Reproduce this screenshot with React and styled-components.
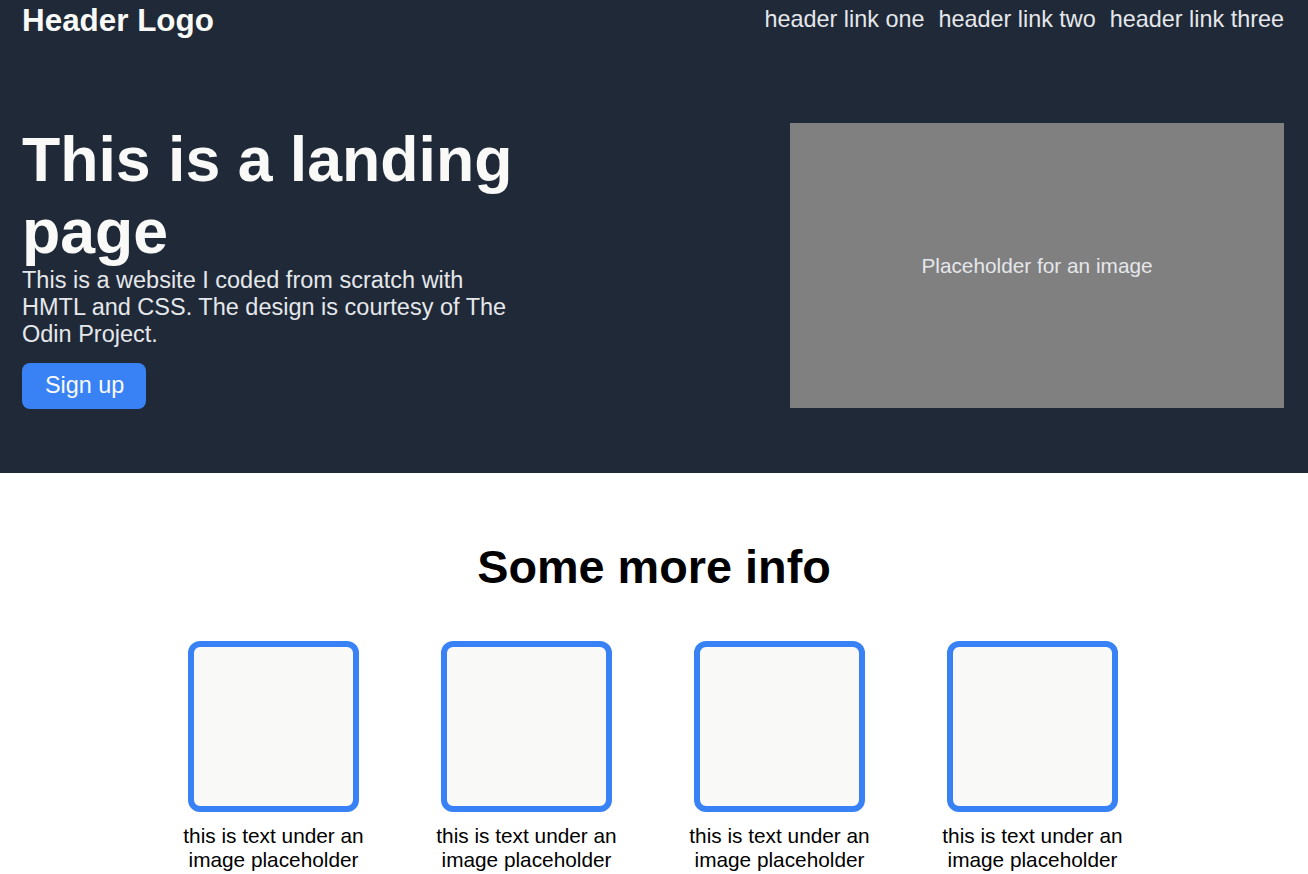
import React from 'react';
import styled, { createGlobalStyle } from 'styled-components';

const GlobalStyle = createGlobalStyle`
  * {
    box-sizing: border-box;
  }

  body {
    margin: 0;
    font-family: 'Liberation Sans', Arial, sans-serif;
    background: #ffffff;
  }
`;

const Top = styled.div`
  background: #1f2937;
  padding: 3px 24px 64px 22px;
`;

const Header = styled.header`
  display: flex;
  justify-content: space-between;
  align-items: center;
`;

const Logo = styled.div`
  color: #f9faf8;
  font-size: 31.4px;
  font-weight: bold;
`;

const Links = styled.nav`
  display: flex;
  gap: 14px;
  margin-top: -4px;
`;

const HeaderLink = styled.a`
  color: #e5e7eb;
  font-size: 23.4px;
  text-decoration: none;
`;

const Hero = styled.section`
  display: flex;
  justify-content: space-between;
  align-items: flex-start;
  margin-top: 84px;
`;

const HeroText = styled.div`
  width: 500px;
`;

const Title = styled.h1`
  margin: 0;
  color: #f9faf8;
  font-size: 62.6px;
  font-weight: bold;
`;

const Lead = styled.p`
  margin: 0 0 15px;
  color: #e5e7eb;
  font-size: 23.5px;
`;

const Button = styled.button`
  background: #3882f6;
  color: #f9faf8;
  border: none;
  border-radius: 8px;
  font-family: inherit;
  font-size: 23.4px;
  padding: 9px 22px 10px 23px;
`;

const ImageBox = styled.div`
  width: 494px;
  height: 285px;
  background: #808080;
  color: #e5e7eb;
  font-size: 20.8px;
  display: flex;
  align-items: center;
  justify-content: center;
`;

const Info = styled.section`
  padding: 67px 0 0;
  display: flex;
  flex-direction: column;
  align-items: center;
`;

const InfoTitle = styled.h2`
  margin: 0 0 47px;
  font-size: 46.8px;
  font-weight: bold;
  color: #000;
`;

const Cards = styled.div`
  display: flex;
  gap: 52px;
  margin-left: -2px;
`;

const Card = styled.div`
  width: 201px;
  display: flex;
  flex-direction: column;
  align-items: center;
`;

const CardImage = styled.div`
  width: 171px;
  height: 171px;
  border: 6px solid #3882f6;
  border-radius: 12px;
  background: #f9faf8;
`;

const CardText = styled.p`
  margin: 12px 0 0;
  font-size: 20.8px;
  text-align: center;
  color: #000;
`;

const cards = [1, 2, 3, 4];

export default function App() {
  return (
    <>
      <GlobalStyle />
      <Top>
        <Header>
          <Logo>Header Logo</Logo>
          <Links>
            <HeaderLink href="#">header link one</HeaderLink>
            <HeaderLink href="#">header link two</HeaderLink>
            <HeaderLink href="#">header link three</HeaderLink>
          </Links>
        </Header>
        <Hero>
          <HeroText>
            <Title>This is a landing page</Title>
            <Lead>
              This is a website I coded from scratch with HMTL and CSS. The
              design is courtesy of The Odin Project.
            </Lead>
            <Button>Sign up</Button>
          </HeroText>
          <ImageBox>Placeholder for an image</ImageBox>
        </Hero>
      </Top>
      <Info>
        <InfoTitle>Some more info</InfoTitle>
        <Cards>
          {cards.map((n) => (
            <Card key={n}>
              <CardImage />
              <CardText>
                this is text under an
                <br />
                image placeholder
              </CardText>
            </Card>
          ))}
        </Cards>
      </Info>
    </>
  );
}
